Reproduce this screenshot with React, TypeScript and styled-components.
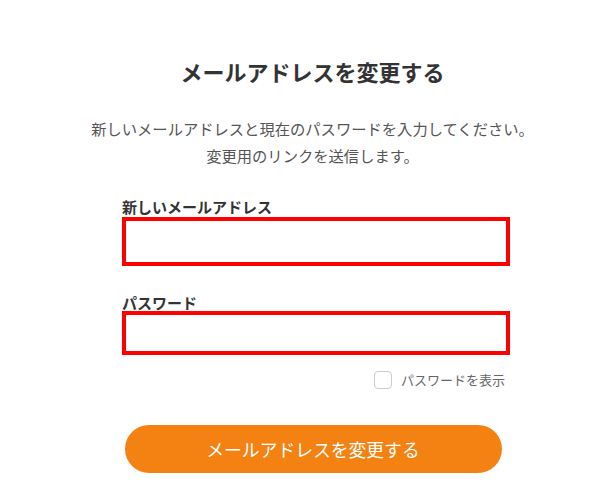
import React, { useState } from 'react';
import styled, { createGlobalStyle } from 'styled-components';

const GlobalStyle = createGlobalStyle`
  html, body {
    margin: 0;
    padding: 0;
    background: #fff;
  }
  body {
    font-family: 'Noto Sans CJK JP', 'Noto Sans', sans-serif;
    color: #333;
  }
`;

export default function App() {
  const [showPassword, setShowPassword] = useState(false);

  return (
    <>
      <GlobalStyle />
      <Page>
        <Title>メールアドレスを変更する</Title>
        <Lead>
          新しいメールアドレスと現在のパスワードを入力してください。
          <br />
          変更用のリンクを送信します。
        </Lead>
        <Form onSubmit={(e) => e.preventDefault()}>
          <Label htmlFor="new-email">新しいメールアドレス</Label>
          <Input id="new-email" type="email" $height={49} />
          <Label htmlFor="password" $spaced>
            パスワード
          </Label>
          <Input
            id="password"
            type={showPassword ? 'text' : 'password'}
            $height={44}
            $overlap
          />
          <ToggleRow>
            <Check
              type="checkbox"
              checked={showPassword}
              onChange={(e) => setShowPassword(e.target.checked)}
            />
            <ToggleText>パスワードを表示</ToggleText>
          </ToggleRow>
          <SubmitRow>
            <Submit type="submit">メールアドレスを変更する</Submit>
          </SubmitRow>
        </Form>
      </Page>
    </>
  );
}

const Page = styled.div`
  display: flex;
  flex-direction: column;
  align-items: center;
  padding: 56px 0 0 18px;
`;

const Title = styled.h1`
  margin: 0;
  font-size: 22px;
  line-height: 30px;
  font-weight: 700;
  color: #333;
`;

const Lead = styled.p`
  margin: 29px 0 0;
  font-size: 15.3px;
  line-height: 27px;
  text-align: center;
  color: #555;
`;

const Form = styled.form`
  align-self: flex-start;
  margin: 28px 0 0 104px;
  width: 388px;
  display: flex;
  flex-direction: column;
`;

const Label = styled.label<{ $spaced?: boolean }>`
  display: block;
  margin-top: ${(p) => (p.$spaced ? '27px' : '0')};
  font-size: 15px;
  line-height: 20px;
  font-weight: 700;
  color: #333;
`;

const Input = styled.input<{ $height: number; $overlap?: boolean }>`
  position: relative;
  box-sizing: border-box;
  width: 388px;
  height: ${(p) => p.$height}px;
  margin-top: ${(p) => (p.$overlap ? '-2px' : '0')};
  border: 4px solid #ff0000;
  background: #fff;
  padding: 0 10px;
  font-size: 15px;
  outline: none;
`;

const ToggleRow = styled.label`
  display: flex;
  align-items: center;
  justify-content: flex-end;
  gap: 9px;
  margin-top: 16px;
  padding-right: 5px;
  cursor: pointer;
`;

const Check = styled.input`
  appearance: none;
  margin: 0;
  width: 18px;
  height: 18px;
  border: 1px solid #ccc;
  border-radius: 4px;
  background: #fff;

  &:checked {
    background: #f38212;
    border-color: #f38212;
  }
`;

const ToggleText = styled.span`
  font-size: 13px;
  line-height: 18px;
  color: #666;
`;

const SubmitRow = styled.div`
  display: flex;
  justify-content: center;
  margin-top: 36px;
  padding-right: 6px;
`;

const Submit = styled.button`
  width: 377px;
  height: 48px;
  border: none;
  border-radius: 24px;
  background: #f38212;
  color: #fff;
  font-family: inherit;
  font-size: 17.8px;
  cursor: pointer;
`;
